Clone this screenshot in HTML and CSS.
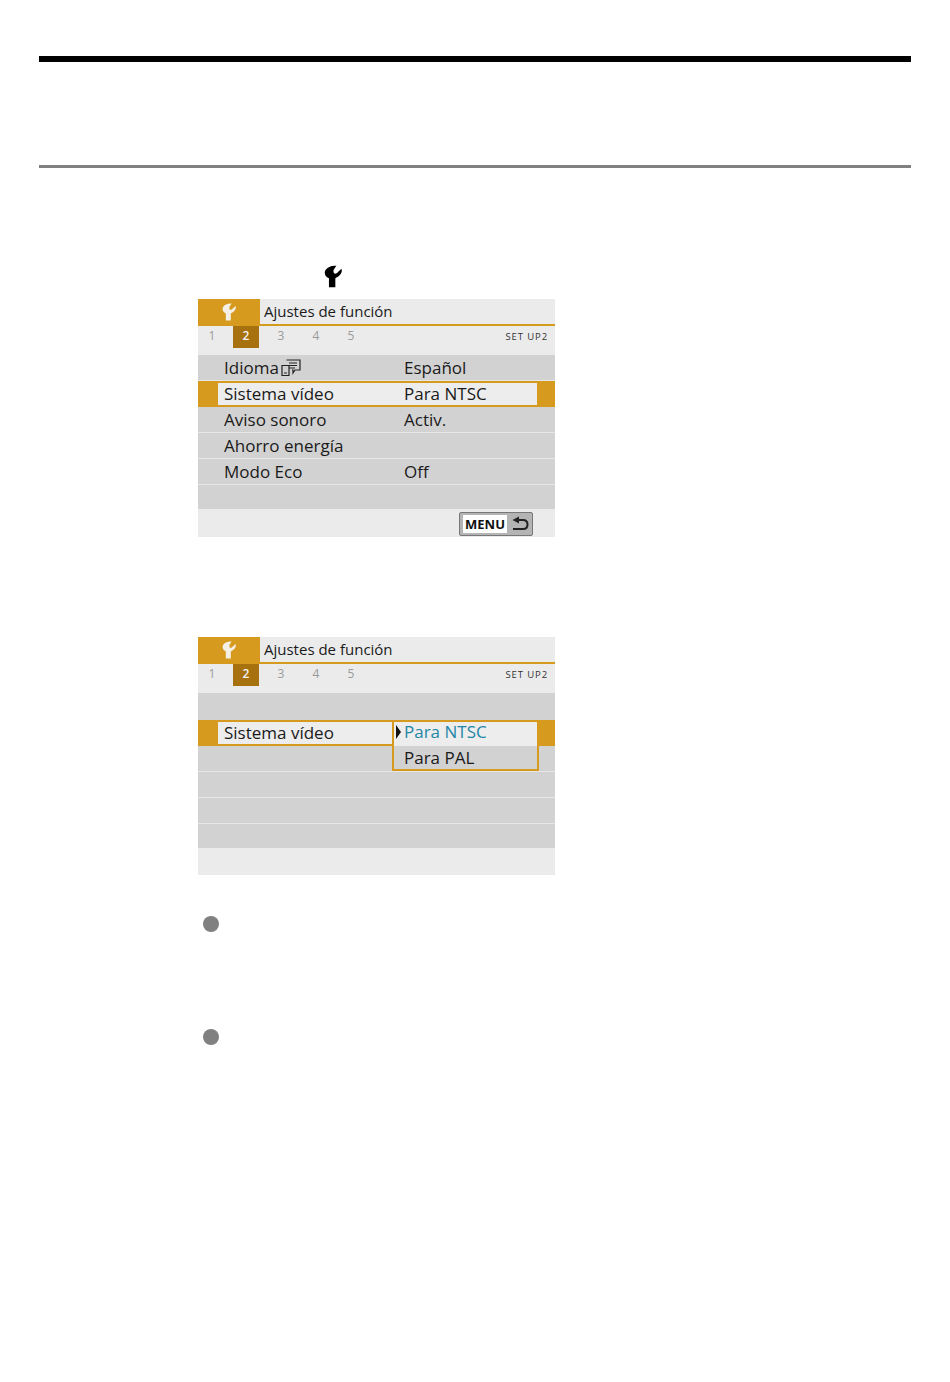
FILE: index.html
```html
<!DOCTYPE html>
<html lang="es">
<head>
    <meta charset="UTF-8">
    <title>Sistema video</title>
    <link rel="stylesheet" href="styles.css">
</head>
<body>
    <svg width="0" height="0" class="defs">
        <symbol id="wrench" viewBox="0 0 20 24">
            <path d="M13.700 0 L10.800 4.500 C10.200 6 10.500 7.800 11.500 8.800 C13 9.200 14.500 8.300 15.500 7 L19.500 3.500 C20.500 7 19 11 12.600 14 L12.600 24 L5.500 24 L5.500 14 C1 12 0 8 1.500 5 C3.500 1.500 8.500 -.5 13.700 0 Z"/>
        </symbol>
    </svg>

    <div class="rule-top"></div>
    <div class="rule-sub"></div>

    <div class="step-icon">
        <svg class="wrench-black"><use href="#wrench"/></svg>
    </div>

    <div class="screen">
        <div class="head">
            <div class="head-tab"><svg class="wrench-white"><use href="#wrench"/></svg></div>
            <div class="head-title">Ajustes de función</div>
        </div>
        <div class="tabs">
            <span class="num">1</span>
            <span class="num active">2</span>
            <span class="num">3</span>
            <span class="num">4</span>
            <span class="num">5</span>
            <span class="tab-name">SET UP2</span>
        </div>
        <div class="list">
            <div class="row">
                <span class="label">Idioma<svg class="lang" viewBox="0 0 20 18"><path d="M5.500 1 H19 V11 H14 L12 14 V11 H11 M8 4 H16 M8 6.500 H16 M8 9 H14 M1 6.500 H8 V16.500 H1 Z M3 14 H6" fill="none" stroke="#222" stroke-width="1.200"/></svg></span>
                <span class="value">Español</span>
            </div>
            <div class="row selected">
                <div class="sel-box">
                    <span class="label">Sistema vídeo</span>
                    <span class="value">Para NTSC</span>
                </div>
            </div>
            <div class="row"><span class="label">Aviso sonoro</span><span class="value">Activ.</span></div>
            <div class="row"><span class="label">Ahorro energía</span></div>
            <div class="row"><span class="label">Modo Eco</span><span class="value">Off</span></div>
            <div class="row last"></div>
        </div>
        <div class="foot">
            <div class="menu-btn">
                <span class="menu-word">MENU</span>
                <svg class="back" viewBox="0 0 18 14"><path d="M8 0 L1.500 3.500 L8 7 Z" fill="#222"/><path d="M6 3.500 H12 C15 3.500 16.500 5.500 16.500 8 C16.500 10.500 15 12.500 12 12.500 H2" fill="none" stroke="#222" stroke-width="2"/></svg>
            </div>
        </div>
    </div>

    <div class="screen second">
        <div class="head">
            <div class="head-tab"><svg class="wrench-white"><use href="#wrench"/></svg></div>
            <div class="head-title">Ajustes de función</div>
        </div>
        <div class="tabs">
            <span class="num">1</span>
            <span class="num active">2</span>
            <span class="num">3</span>
            <span class="num">4</span>
            <span class="num">5</span>
            <span class="tab-name">SET UP2</span>
        </div>
        <div class="list">
            <div class="row blank"></div>
            <div class="row selected">
                <div class="sel-box short">
                    <span class="label">Sistema vídeo</span>
                </div>
                <div class="popup">
                    <div class="opt current"><span class="arrow"></span>Para NTSC</div>
                    <div class="opt">Para PAL</div>
                </div>
            </div>
            <div class="row"></div>
            <div class="row"></div>
            <div class="row"></div>
            <div class="row last"></div>
        </div>
        <div class="foot"></div>
    </div>

    <div class="dot first"></div>
    <div class="dot next"></div>
</body>
</html>
```

FILE: styles.css
```css
body {
    margin: 0;
    padding: 56px 39px 0;
    height: 1382px;
    box-sizing: border-box;
    background: #fff;
    font-family: "Open Sans", sans-serif;
    color: #1a1a1a;
    overflow: hidden;
}
.defs {
    display: block;
    height: 0;
}
.rule-top {
    height: 6px;
    background: #000;
}
.rule-sub {
    height: 3px;
    margin-top: 103px;
    background: #808080;
}
.step-icon {
    margin: 97px 0 0 285px;
    height: 24px;
}
.wrench-black {
    display: block;
    width: 18px;
    height: 23px;
    fill: #000;
}
.screen {
    width: 357px;
    margin: 10px 0 0 159px;
    background: #ebebeb;
}
.second {
    margin-top: 100px;
}
.head {
    display: flex;
    height: 27px;
    box-sizing: border-box;
    border-bottom: 2px solid #d69b1e;
}
.head-tab {
    width: 62px;
    background: #d69b1e;
    display: flex;
    justify-content: center;
    padding-top: 4px;
    box-sizing: border-box;
}
.wrench-white {
    width: 14px;
    height: 18px;
    fill: #f4f0e6;
}
.head-title {
    padding-left: 4px;
    font-size: 15px;
    line-height: 25px;
}
.tabs {
    display: flex;
    align-items: center;
    height: 22px;
    font-size: 12px;
    margin-bottom: 7px;
}
.num {
    width: 26px;
    height: 22px;
    line-height: 20px;
    text-align: center;
    color: #9a9a9a;
    margin-right: 9px;
}
.num:first-child {
    margin-left: 1px;
    margin-right: 8px;
}
.num.active {
    background: #a8710f;
    color: #f2f2f2;
    font-weight: 600;
}
.tab-name {
    margin-left: auto;
    margin-right: 7px;
    margin-bottom: 2px;
    font-size: 9.5px;
    letter-spacing: 0.9px;
    color: #333;
}
.list {
    background: #d2d2d2;
}
.row {
    display: flex;
    align-items: center;
    height: 26px;
    box-sizing: border-box;
    padding-left: 26px;
    border-bottom: 1px solid #e6e6e6;
    font-size: 17px;
    position: relative;
}
.row.last {
    height: 24px;
    border-bottom: none;
}
.row.blank {
    height: 27px;
    border-bottom: none;
}
.label {
    display: flex;
    align-items: center;
    width: 180px;
}
.lang {
    width: 20px;
    height: 18px;
    margin-left: 2px;
}
.row.selected {
    background: #d69b1e;
    padding-left: 20px;
    border-bottom: none;
}
.sel-box {
    display: flex;
    align-items: center;
    width: 319px;
    height: 22px;
    padding: 0 0 2px 6px;
    box-sizing: border-box;
    background: #ededed;
}
.sel-box.short {
    width: 174px;
}
.popup {
    position: absolute;
    left: 194px;
    top: 0;
    width: 147px;
    height: 51px;
    box-sizing: border-box;
    border: 2px solid #d69b1e;
    background: #d2d2d2;
    z-index: 1;
}
.opt {
    height: 24px;
    line-height: 24px;
    padding-left: 10px;
    position: relative;
}
.opt.current {
    background: #ededed;
    color: #1f86a8;
    line-height: 19px;
}
.arrow {
    position: absolute;
    left: 2px;
    top: 3px;
    border-left: 5px solid #111;
    border-top: 7px solid transparent;
    border-bottom: 7px solid transparent;
}
.foot {
    display: flex;
    justify-content: flex-end;
    align-items: center;
    height: 28px;
    box-sizing: border-box;
    padding: 1px 22px 0 0;
}
.second .foot {
    height: 27px;
}
.menu-btn {
    display: flex;
    align-items: center;
    width: 74px;
    height: 24px;
    box-sizing: border-box;
    padding: 2px;
    background: #b4b4b4;
    border: 1px solid #777;
    border-radius: 2px;
}
.menu-word {
    background: #fff;
    height: 18px;
    width: 44px;
    line-height: 18px;
    text-align: center;
    font-size: 13px;
    font-weight: 700;
    color: #111;
    margin-left: 1px;
}
.back {
    width: 18px;
    height: 15px;
    margin-left: 4px;
}
.dot {
    width: 16px;
    height: 16px;
    margin-left: 164px;
    border-radius: 50%;
    background: #808080;
}
.dot.first {
    margin-top: 41px;
}
.dot.next {
    margin-top: 97px;
}
```
